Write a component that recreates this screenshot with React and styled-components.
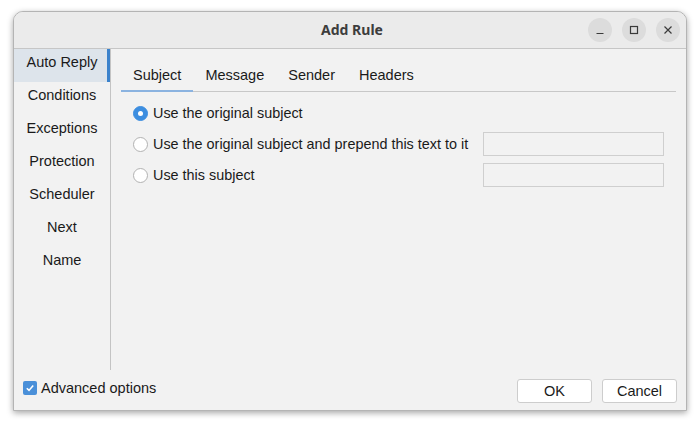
import React from 'react'
import styled, { createGlobalStyle } from 'styled-components'

const GlobalStyle = createGlobalStyle`
  body {
    margin: 0;
    background: #ffffff;
    font-family: "Liberation Sans", Arial, sans-serif;
  }
`

const Page = styled.div`
  padding: 11px 13px 17px 13px;
`

const Window = styled.div`
  width: 674px;
  height: 400px;
  box-sizing: border-box;
  display: flex;
  flex-direction: column;
  background: #f2f2f2;
  border: 1px solid #b4b4b4;
  border-radius: 10px 10px 0 0;
  box-shadow: 0 2px 6px rgba(0, 0, 0, 0.35);
  overflow: hidden;
`

const TitleBar = styled.div`
  height: 37px;
  flex: none;
  box-sizing: border-box;
  display: grid;
  grid-template-columns: 1fr auto 1fr;
  align-items: center;
  background: #ebebeb;
  border-bottom: 1px solid #c6c6c6;
  padding: 0 6px 1px 10px;
`

const Title = styled.div`
  grid-column: 2;
  font-family: "Noto Sans", "Open Sans", sans-serif;
  font-weight: 700;
  font-size: 14px;
  color: #3d3d3d;
`

const Controls = styled.div`
  grid-column: 3;
  justify-self: end;
  display: flex;
  gap: 10px;
`

const CtrlButton = styled.div`
  width: 24px;
  height: 24px;
  border-radius: 50%;
  background: #dcdcdc;
  display: flex;
  align-items: center;
  justify-content: center;
`

const Main = styled.div`
  flex: 1;
  display: flex;
  min-height: 0;
`

const Sidebar = styled.div`
  width: 96px;
  flex: none;
  border-right: 1px solid #c4c4c4;
  display: flex;
  flex-direction: column;
`

const NavItem = styled.div`
  height: 33px;
  box-sizing: border-box;
  padding-top: 4px;
  text-align: center;
  font-size: 14.5px;
  line-height: 18px;
  color: #1a1a1a;
  background: ${p => (p.$active ? '#dde4eb' : 'transparent')};
  box-shadow: ${p => (p.$active ? 'inset -3px 0 0 #3b82cc' : 'none')};
`

const Content = styled.div`
  flex: 1;
  padding: 10px 10px 0 10px;
  display: flex;
  flex-direction: column;
`

const TabBar = styled.div`
  display: flex;
  border-bottom: 1px solid #c8c8c8;
`

const Tab = styled.div`
  height: 33px;
  box-sizing: border-box;
  padding: 0 12px 0;
  display: flex;
  align-items: center;
  font-size: 14.5px;
  color: #1a1a1a;
  border-bottom: 2px solid ${p => (p.$active ? '#8bb3e0' : 'transparent')};
  margin-bottom: -1px;
`

const Options = styled.div`
  display: flex;
  flex-direction: column;
  gap: 7px;
  padding: 9px 12px 0 12px;
`

const OptionRow = styled.div`
  height: 24px;
  display: flex;
  align-items: center;
`

const Label = styled.label`
  flex: 1;
  display: flex;
  align-items: center;
  gap: 5px;
  font-size: 14.4px;
  color: #1a1a1a;
`

const Radio = styled.span`
  width: 15px;
  height: 15px;
  box-sizing: border-box;
  border-radius: 50%;
  flex: none;
  display: flex;
  align-items: center;
  justify-content: center;
  background: ${p => (p.$checked ? '#3d8ee0' : '#ffffff')};
  border: 1px solid ${p => (p.$checked ? '#3d8ee0' : '#b2b2b2')};
  &::after {
    content: '';
    width: 5px;
    height: 5px;
    border-radius: 50%;
    background: #ffffff;
    display: ${p => (p.$checked ? 'block' : 'none')};
  }
`

const TextField = styled.div`
  width: 181px;
  height: 24px;
  box-sizing: border-box;
  border: 1px solid #cfcfcf;
  background: #f2f2f2;
`

const Footer = styled.div`
  height: 40px;
  flex: none;
  display: flex;
  align-items: flex-end;
  justify-content: space-between;
  padding: 0 9px 7px 9px;
  box-sizing: border-box;
`

const CheckLabel = styled.label`
  display: flex;
  align-items: center;
  gap: 4px;
  font-size: 14.5px;
  color: #1a1a1a;
  margin-bottom: 7px;
`

const CheckBox = styled.span`
  width: 14px;
  height: 14px;
  border-radius: 2px;
  background: #4a90d9;
  display: flex;
  align-items: center;
  justify-content: center;
`

const Buttons = styled.div`
  display: flex;
  gap: 10px;
`

const Button = styled.div`
  width: 75px;
  height: 24px;
  box-sizing: border-box;
  border: 1px solid #cdcdcd;
  border-radius: 3px;
  background: #ffffff;
  display: flex;
  align-items: center;
  justify-content: center;
  font-size: 14.5px;
  color: #1a1a1a;
`

const navItems = ['Auto Reply', 'Conditions', 'Exceptions', 'Protection', 'Scheduler', 'Next', 'Name']
const tabs = ['Subject', 'Message', 'Sender', 'Headers']
const options = [
  { text: 'Use the original subject', checked: true, field: false },
  { text: 'Use the original subject and prepend this text to it', checked: false, field: true },
  { text: 'Use this subject', checked: false, field: true },
]

const App = () => (
  <>
    <GlobalStyle />
    <Page>
      <Window>
        <TitleBar>
          <Title>Add Rule</Title>
          <Controls>
            <CtrlButton>
              <svg width="10" height="10" viewBox="0 0 10 10">
                <path d="M1.5 8.5h7" stroke="#3a3a3a" strokeWidth="1.2" />
              </svg>
            </CtrlButton>
            <CtrlButton>
              <svg width="10" height="10" viewBox="0 0 10 10">
                <rect x="1.5" y="1.5" width="7" height="7" fill="none" stroke="#3a3a3a" strokeWidth="1.2" />
              </svg>
            </CtrlButton>
            <CtrlButton>
              <svg width="10" height="10" viewBox="0 0 10 10">
                <path d="M1.5 1.5l7 7M8.5 1.5l-7 7" stroke="#3a3a3a" strokeWidth="1.2" />
              </svg>
            </CtrlButton>
          </Controls>
        </TitleBar>
        <Main>
          <Sidebar>
            {navItems.map((n, i) => (
              <NavItem key={n} $active={i === 0}>{n}</NavItem>
            ))}
          </Sidebar>
          <Content>
            <TabBar>
              {tabs.map((t, i) => (
                <Tab key={t} $active={i === 0}>{t}</Tab>
              ))}
            </TabBar>
            <Options>
              {options.map(o => (
                <OptionRow key={o.text}>
                  <Label>
                    <Radio $checked={o.checked} />
                    {o.text}
                  </Label>
                  {o.field && <TextField />}
                </OptionRow>
              ))}
            </Options>
          </Content>
        </Main>
        <Footer>
          <CheckLabel>
            <CheckBox>
              <svg width="10" height="10" viewBox="0 0 10 10">
                <path d="M1.8 5.2l2.2 2.2 4.2-5" fill="none" stroke="#ffffff" strokeWidth="1.6" />
              </svg>
            </CheckBox>
            Advanced options
          </CheckLabel>
          <Buttons>
            <Button>OK</Button>
            <Button>Cancel</Button>
          </Buttons>
        </Footer>
      </Window>
    </Page>
  </>
)

export default App
